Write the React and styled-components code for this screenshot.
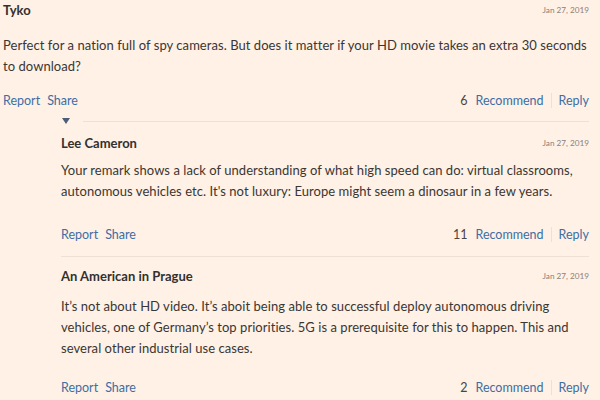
import React from "react";
import styled, { createGlobalStyle } from "styled-components";

const Global = createGlobalStyle`
  html, body { margin: 0; padding: 0; background: #fff1e5; }
  body { font-family: Lato, "Open Sans", sans-serif; color: #33302e; }
`;

const Page = styled.div`
  width: 600px;
  height: 400px;
  overflow: hidden;
  padding: 0 11px 0 3px;
  box-sizing: border-box;
  background: #fff1e5;
`;

const Header = styled.div`
  display: flex;
  justify-content: space-between;
  align-items: center;
  height: 20px;
`;

const Name = styled.span`
  font-weight: 700;
  font-size: 13px;
  color: #33302e;
`;

const DateText = styled.span`
  font-size: 8.2px;
  color: #8a817b;
`;

const Body = styled.p`
  margin: ${(p) => p.$gap}px 0 0;
  font-size: 13px;
  letter-spacing: 0.05px;
  line-height: 21px;
  color: #3a3633;
`;

const Actions = styled.div`
  display: flex;
  justify-content: space-between;
  align-items: center;
  height: 20px;
  margin-top: ${(p) => p.$gap}px;
  font-size: 12.5px;
`;

const Group = styled.div`
  display: flex;
  align-items: center;
  gap: 7px;
`;

const Link = styled.a`
  color: #3d6ea4;
  text-decoration: none;
  cursor: pointer;
`;

const Count = styled.span`
  color: #4a4542;
  margin-right: 1px;
`;

const Sep = styled.span`
  width: 1px;
  height: 15px;
  background: #efe0d3;
`;

const Replies = styled.div`
  margin-left: 58px;
`;

const Marker = styled.div`
  display: flex;
  align-items: center;
  height: 10px;
  gap: 13px;
  margin-top: 6px;
  &::after {
    content: "";
    flex: 1;
    height: 1px;
    background: #eee0d4;
  }
`;

const Arrow = styled.span`
  width: 0;
  height: 0;
  border-left: 4px solid transparent;
  border-right: 4px solid transparent;
  border-top: 6px solid #4b5d7a;
  margin-left: 1px;
`;

const Item = styled.div`
  padding-top: ${(p) => p.$top}px;
  padding-bottom: ${(p) => p.$bottom}px;
  border-bottom: ${(p) => (p.$divider ? "1px solid #eee0d4" : "none")};
`;

function Comment({ c }) {
  return (
    <>
      <Header>
        <Name>{c.name}</Name>
        <DateText>{c.date}</DateText>
      </Header>
      <Body $gap={c.bodyGap}>{c.text}</Body>
      <Actions $gap={c.actionGap}>
        <Group>
          <Link>Report</Link>
          <Link>Share</Link>
        </Group>
        <Group>
          <Count>{c.count}</Count>
          <Link>Recommend</Link>
          <Sep />
          <Link>Reply</Link>
        </Group>
      </Actions>
    </>
  );
}

const top = {
  name: "Tyko",
  date: "Jan 27, 2019",
  text: "Perfect for a nation full of spy cameras. But does it matter if your HD movie takes an extra 30 seconds to download?",
  count: 6,
  bodyGap: 15,
  actionGap: 13,
};

const replies = [
  {
    name: "Lee Cameron",
    date: "Jan 27, 2019",
    text: "Your remark shows a lack of understanding of what high speed can do: virtual classrooms, autonomous vehicles etc. It's not luxury: Europe might seem a dinosaur in a few years.",
    count: 11,
    bodyGap: 7,
    actionGap: 22,
    top: 7,
    bottom: 12,
    divider: true,
  },
  {
    name: "An American in Prague",
    date: "Jan 27, 2019",
    text: "It’s not about HD video. It’s aboit being able to successful deploy autonomous driving vehicles, one of Germany’s top priorities. 5G is a prerequisite for this to happen. This and several other industrial use cases.",
    count: 2,
    bodyGap: 10,
    actionGap: 18,
    top: 9,
    bottom: 0,
    divider: false,
  },
];

export default function App() {
  return (
    <Page>
      <Global />
      <Comment c={top} />
      <Replies>
        <Marker>
          <Arrow />
        </Marker>
        {replies.map((r) => (
          <Item key={r.name} $top={r.top} $bottom={r.bottom} $divider={r.divider}>
            <Comment c={r} />
          </Item>
        ))}
      </Replies>
    </Page>
  );
}
